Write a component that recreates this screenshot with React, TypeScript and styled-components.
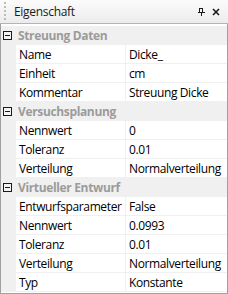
import React from "react";
import styled, { createGlobalStyle } from "styled-components";

const Global = createGlobalStyle`
  html, body { margin: 0; padding: 0; background: #ffffff; }
  body { font-family: "Segoe UI", "Open Sans", "Noto Sans", sans-serif; font-size: 12px; }
`;

const Panel = styled.div`
  width: 228px;
  height: 294px;
  display: flex;
  flex-direction: column;
  background: #ffffff;
  overflow: hidden;
`;

const TitleBar = styled.div`
  height: 23px;
  border-bottom: 1px solid #b4b4b4;
  background: linear-gradient(#fbfbfb, #ececec);
  display: flex;
  align-items: center;
  padding-left: 4px;
  padding-right: 8px;
  gap: 8px;
`;

const Grip = styled.div`
  width: 2px;
  height: 20px;
  background: repeating-linear-gradient(
    to bottom,
    #b7c0b3 0px,
    #b7c0b3 2px,
    transparent 2px,
    transparent 4px
  );
`;

const Title = styled.span`
  flex: 1;
  color: #1b1b1b;
  font-family: "Open Sans", "Noto Sans", sans-serif;
  font-size: 12px;
  letter-spacing: -0.3px;
`;

const TitleIcons = styled.div`
  display: flex;
  align-items: center;
  gap: 7px;
`;

const Grid = styled.div`
  flex: 1;
  display: flex;
  flex-direction: column;
  padding-top: 2px;
  border-left: 1px solid #a0a0a0;
  border-right: 1px solid #a0a0a0;
  border-bottom: 1px solid #a0a0a0;
`;

const CategoryRow = styled.div`
  height: 18px;
  border-bottom: 1px solid #f0f0f0;
  background: #f0f0f0;
  display: flex;
  align-items: center;
  padding-left: 2px;
  gap: 6px;
`;

const ToggleBox = styled.div`
  width: 7px;
  height: 7px;
  border: 1px solid #1a1a1a;
  background: #f4f4f4;
  display: flex;
  align-items: center;
  justify-content: center;
  &::after {
    content: "";
    width: 5px;
    height: 1px;
    background: #1a1a1a;
  }
`;

const CategoryLabel = styled.span`
  font-family: "Open Sans", "Noto Sans", sans-serif;
  font-weight: 700;
  color: #9b9b9b;
  font-size: 12px;
  letter-spacing: -0.35px;
`;

const PropRow = styled.div`
  height: 18px;
  display: grid;
  grid-template-columns: 15px 109px 1px 1fr;
  border-bottom: 1px solid #f0f0f0;
`;

const Margin = styled.div`
  background: #f0f0f0;
`;

const Divider = styled.div`
  background: #f0f0f0;
`;

const Cell = styled.div`
  display: flex;
  align-items: center;
  padding-left: 3px;
  font-family: "Open Sans", "Noto Sans", sans-serif;
  font-size: 12px;
  letter-spacing: -0.38px;
  color: #000000;
  white-space: nowrap;
  overflow: hidden;
`;

type Prop = [string, string];
type Category = { name: string; props: Prop[] };

const data: Category[] = [
  {
    name: "Streuung Daten",
    props: [
      ["Name", "Dicke_"],
      ["Einheit", "cm"],
      ["Kommentar", "Streuung Dicke"],
    ],
  },
  {
    name: "Versuchsplanung",
    props: [
      ["Nennwert", "0"],
      ["Toleranz", "0.01"],
      ["Verteilung", "Normalverteilung"],
    ],
  },
  {
    name: "Virtueller Entwurf",
    props: [
      ["Entwurfsparameter", "False"],
      ["Nennwert", "0.0993"],
      ["Toleranz", "0.01"],
      ["Verteilung", "Normalverteilung"],
      ["Typ", "Konstante"],
    ],
  },
];

const PinIcon = () => (
  <svg width="7" height="8" viewBox="0 0 7 8" shapeRendering="crispEdges">
    <rect x="1.5" y="0.5" width="3" height="4" fill="none" stroke="#1a1a1a" />
    <rect x="4" y="0" width="1" height="5" fill="#1a1a1a" />
    <rect x="0" y="4" width="7" height="1" fill="#1a1a1a" />
    <rect x="3" y="5" width="1" height="3" fill="#1a1a1a" />
  </svg>
);

const CloseIcon = () => (
  <svg width="8" height="8" viewBox="0 0 8 8">
    <path d="M1 1 L7 7 M7 1 L1 7" stroke="#1a1a1a" strokeWidth="1.6" fill="none" />
  </svg>
);

export default function App() {
  return (
    <>
      <Global />
      <Panel>
        <TitleBar>
          <Grip />
          <Title>Eigenschaft</Title>
          <TitleIcons>
            <PinIcon />
            <CloseIcon />
          </TitleIcons>
        </TitleBar>
        <Grid>
          {data.map((cat) => (
            <React.Fragment key={cat.name}>
              <CategoryRow>
                <ToggleBox />
                <CategoryLabel>{cat.name}</CategoryLabel>
              </CategoryRow>
              {cat.props.map(([k, v], i) => (
                <PropRow key={cat.name + i}>
                  <Margin />
                  <Cell>{k}</Cell>
                  <Divider />
                  <Cell>{v}</Cell>
                </PropRow>
              ))}
            </React.Fragment>
          ))}
        </Grid>
      </Panel>
    </>
  );
}
